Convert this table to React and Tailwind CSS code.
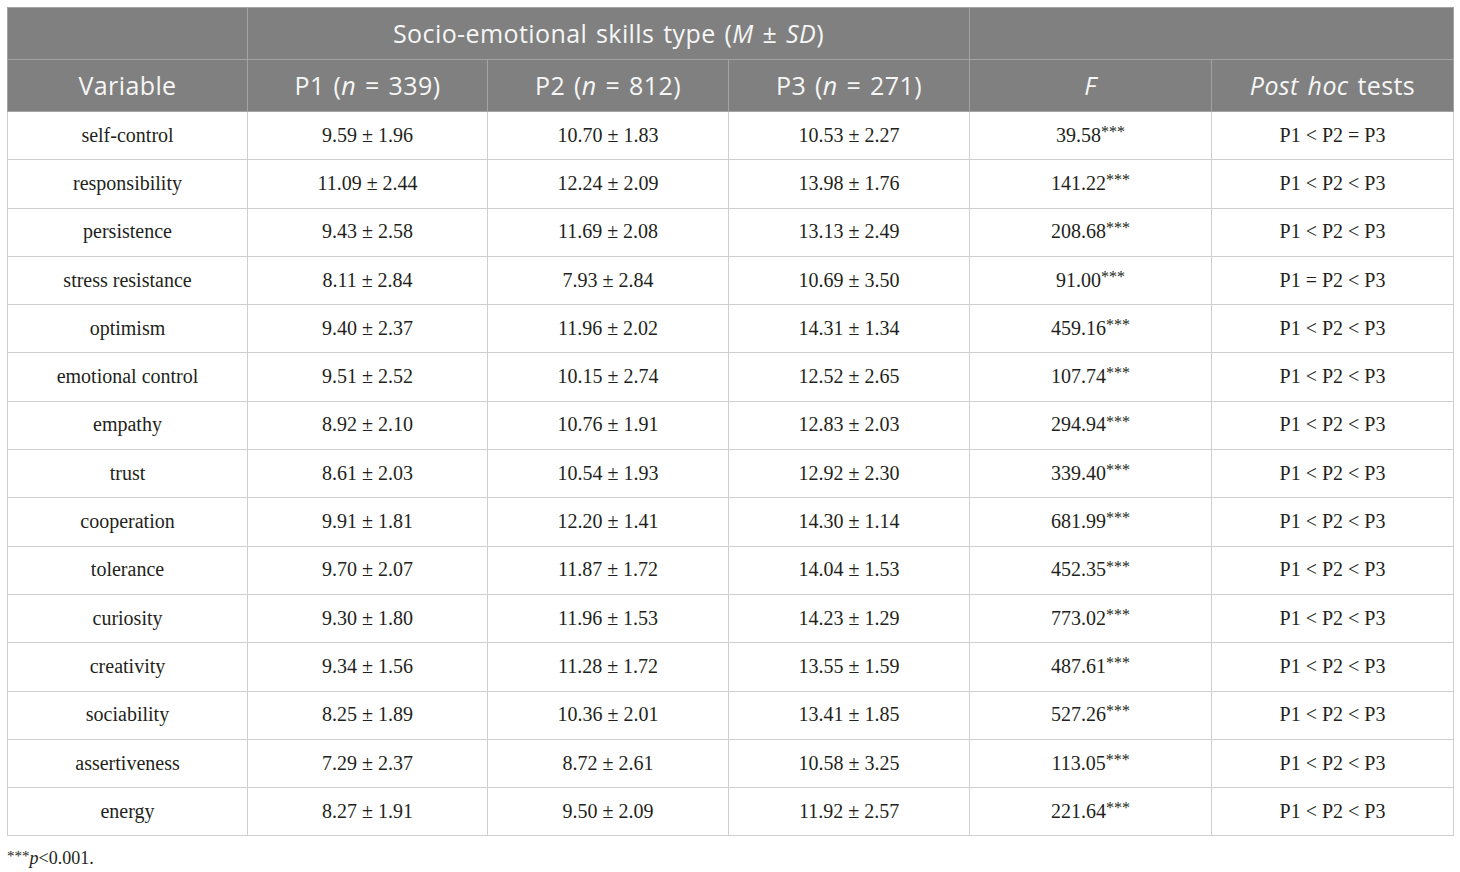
import React from "react";

const rows = [
    ["self-control", "9.59 ± 1.96", "10.70 ± 1.83", "10.53 ± 2.27", "39.58", "P1 < P2 = P3"],
    ["responsibility", "11.09 ± 2.44", "12.24 ± 2.09", "13.98 ± 1.76", "141.22", "P1 < P2 < P3"],
    ["persistence", "9.43 ± 2.58", "11.69 ± 2.08", "13.13 ± 2.49", "208.68", "P1 < P2 < P3"],
    ["stress resistance", "8.11 ± 2.84", "7.93 ± 2.84", "10.69 ± 3.50", "91.00", "P1 = P2 < P3"],
    ["optimism", "9.40 ± 2.37", "11.96 ± 2.02", "14.31 ± 1.34", "459.16", "P1 < P2 < P3"],
    ["emotional control", "9.51 ± 2.52", "10.15 ± 2.74", "12.52 ± 2.65", "107.74", "P1 < P2 < P3"],
    ["empathy", "8.92 ± 2.10", "10.76 ± 1.91", "12.83 ± 2.03", "294.94", "P1 < P2 < P3"],
    ["trust", "8.61 ± 2.03", "10.54 ± 1.93", "12.92 ± 2.30", "339.40", "P1 < P2 < P3"],
    ["cooperation", "9.91 ± 1.81", "12.20 ± 1.41", "14.30 ± 1.14", "681.99", "P1 < P2 < P3"],
    ["tolerance", "9.70 ± 2.07", "11.87 ± 1.72", "14.04 ± 1.53", "452.35", "P1 < P2 < P3"],
    ["curiosity", "9.30 ± 1.80", "11.96 ± 1.53", "14.23 ± 1.29", "773.02", "P1 < P2 < P3"],
    ["creativity", "9.34 ± 1.56", "11.28 ± 1.72", "13.55 ± 1.59", "487.61", "P1 < P2 < P3"],
    ["sociability", "8.25 ± 1.89", "10.36 ± 2.01", "13.41 ± 1.85", "527.26", "P1 < P2 < P3"],
    ["assertiveness", "7.29 ± 2.37", "8.72 ± 2.61", "10.58 ± 3.25", "113.05", "P1 < P2 < P3"],
    ["energy", "8.27 ± 1.91", "9.50 ± 2.09", "11.92 ± 2.57", "221.64", "P1 < P2 < P3"],
];

const head = "border border-[#a3a3a3] text-center font-normal";
const cell = "border border-[#cfcfcf] text-center h-[48.3px] p-0 pb-[2px]";

export default function App() {
    return (
        <div className="min-h-[872px] w-[1460px] bg-white pt-[7px] pl-[7px]">
            <table
                className="w-[1446px] table-fixed border-collapse text-[#231f20]"
                style={{ fontFamily: "'Liberation Serif', serif" }}
            >
                <colgroup>
                    <col className="w-[240px]" />
                    <col className="w-[240px]" />
                    <col className="w-[241px]" />
                    <col className="w-[241px]" />
                    <col className="w-[242px]" />
                    <col className="w-[242px]" />
                </colgroup>
                <thead className="bg-[#7f807f] text-[25px] tracking-[0.4px] [word-spacing:2px] text-[#f6f6f6] font-['Open_Sans',sans-serif]">
                    <tr className="h-[52px]">
                        <th className={head}></th>
                        <th className={head} colSpan={3}>
                            Socio-emotional skills type (<i>M</i> ± <i>SD</i>)
                        </th>
                        <th className={head} colSpan={2}></th>
                    </tr>
                    <tr className="h-[52px]">
                        <th className={head}>Variable</th>
                        <th className={head}>
                            P1 (<i>n</i> = 339)
                        </th>
                        <th className={head}>
                            P2 (<i>n</i> = 812)
                        </th>
                        <th className={head}>
                            P3 (<i>n</i> = 271)
                        </th>
                        <th className={head}>
                            <i>F</i>
                        </th>
                        <th className={head}>
                            <i>Post hoc</i> tests
                        </th>
                    </tr>
                </thead>
                <tbody className="text-[20px]">
                    {rows.map((r) => (
                        <tr key={r[0]}>
                            <td className={cell}>{r[0]}</td>
                            <td className={cell}>{r[1]}</td>
                            <td className={cell}>{r[2]}</td>
                            <td className={cell}>{r[3]}</td>
                            <td className={cell}>
                                {r[4]}
                                <sup className="text-[16px] top-[-0.3em]">***</sup>
                            </td>
                            <td className={cell}>{r[5]}</td>
                        </tr>
                    ))}
                </tbody>
            </table>
            <p
                className="mt-[9px] text-[18px] text-[#231f20]"
                style={{ fontFamily: "'Liberation Serif', serif" }}
            >
                <sup className="text-[15px] top-[-0.25em]">***</sup>
                <i>p</i>&lt;0.001.
            </p>
        </div>
    );
}
